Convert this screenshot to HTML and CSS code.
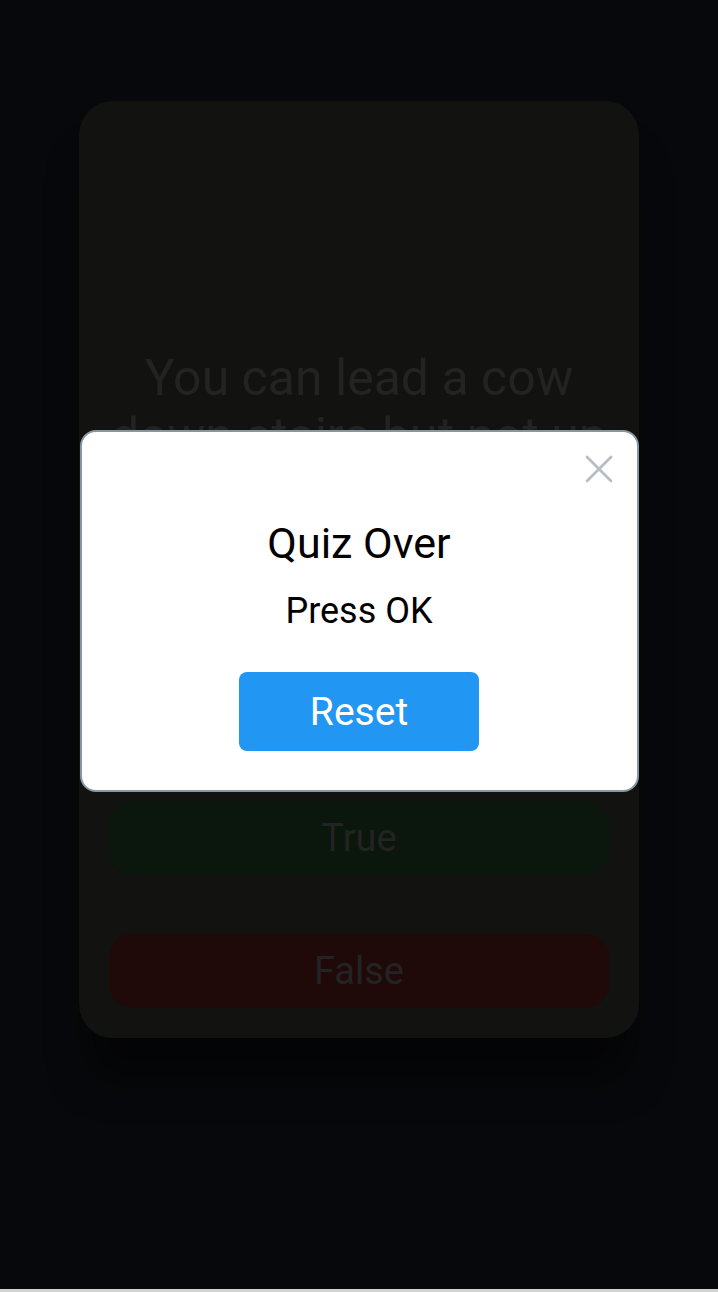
FILE: index.html
```html
<!DOCTYPE html>
<html lang="en">
<head>
<meta charset="utf-8">
<title>Quiz</title>
<link rel="stylesheet" href="styles.css">
</head>
<body>
<div class="screen">
  <div class="card">
    <p class="question">You can lead a cow down stairs but not up</p>
    <div class="answers">
      <button class="answer answer-true">True</button>
      <button class="answer answer-false">False</button>
    </div>
  </div>
  <div class="overlay">
    <div class="modal">
      <button class="close" aria-label="Close">
        <svg width="28" height="28" viewBox="0 0 28 28"><path d="M2 2 L26 26 M26 2 L2 26" stroke="#b6bec5" stroke-width="2.8" stroke-linecap="round" fill="none"/></svg>
      </button>
      <h2 class="modal-title">Quiz Over</h2>
      <p class="modal-text">Press OK</p>
      <button class="reset">Reset</button>
    </div>
  </div>
</div>
</body>
</html>
```

FILE: styles.css
```css
html {
  background: #d2d2d2;
}
body {
  margin: 0;
  font-family: Roboto, "Noto Sans", sans-serif;
}
.screen {
  position: relative;
  height: 1289px;
  background: #07080b;
  overflow: hidden;
  padding-top: 101px;
  box-sizing: border-box;
}
.card {
  width: 560px;
  height: 937px;
  margin: 0 auto;
  box-sizing: border-box;
  background: #121211;
  border-radius: 34px;
  padding: 0 30px 30px;
  display: flex;
  flex-direction: column;
  box-shadow: 0 50px 40px -12px rgba(0, 0, 0, 0.5);
}
.question {
  margin: 248px 0 0;
  font-size: 50px;
  line-height: normal;
  text-align: center;
  color: #232323;
}
.answers {
  margin-top: auto;
  display: flex;
  flex-direction: column;
  gap: 59px;
}
.answer {
  height: 74px;
  border: 0;
  border-radius: 24px;
  font-family: Roboto, "Noto Sans", sans-serif;
  font-size: 38px;
  color: #232323;
}
.answer-true {
  background: #0b160c;
}
.answer-false {
  background: #200a09;
}
.overlay {
  position: absolute;
  inset: 0;
  display: flex;
  justify-content: center;
  align-items: flex-start;
  padding-top: 430px;
}
.modal {
  position: relative;
  width: 559px;
  height: 362px;
  box-sizing: border-box;
  background: #ffffff;
  border: 2px solid #8896a0;
  border-radius: 16px;
  display: flex;
  flex-direction: column;
  align-items: center;
  padding-top: 86px;
}
.close {
  position: absolute;
  top: 23px;
  right: 24px;
  width: 28px;
  height: 28px;
  padding: 0;
  border: 0;
  background: none;
  display: flex;
}
.modal-title {
  margin: 0;
  font-size: 43px;
  font-weight: 400;
  line-height: normal;
  color: #000;
}
.modal-text {
  margin: 22px 0 0;
  font-size: 36px;
  line-height: normal;
  color: #000;
}
.reset {
  margin-top: 40px;
  width: 240px;
  height: 79px;
  border: 0;
  border-radius: 8px;
  background: #2196f3;
  color: #fff;
  font-family: Roboto, "Noto Sans", sans-serif;
  font-size: 39px;
}
```
